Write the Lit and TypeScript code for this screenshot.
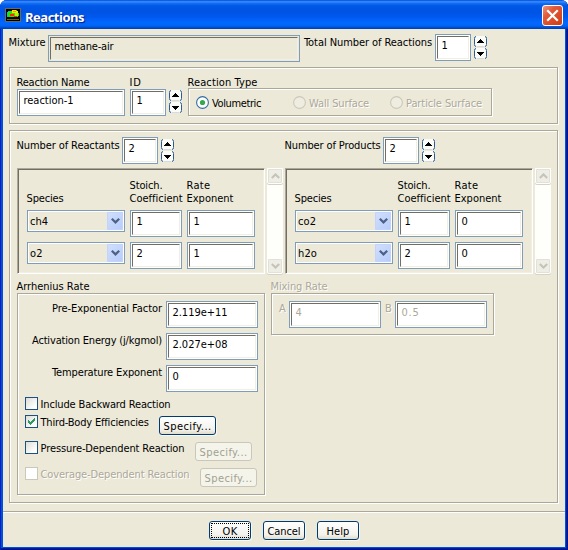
import { LitElement, html, css, svg, nothing } from "lit";
import { customElement, property } from "lit/decorators.js";
import { classMap } from "lit/directives/class-map.js";

// A single line of text whose tracking is adjusted to fill a given advance width.
@customElement("ui-label")
class UiLabel extends LitElement {
  @property() text = "";
  @property({ type: Number }) w = 0;

  static styles = css`
    :host { display: block; flex: none; white-space: pre; height: 13px; line-height: 13px; }
    .run { display: inline-block; }
  `;

  updated() {
    const run = this.renderRoot.querySelector(".run") as HTMLElement;
    run.style.letterSpacing = "0";
    if (!this.w) return;
    const natural = run.getBoundingClientRect().width;
    run.style.letterSpacing = `${(this.w - natural) / this.text.length}px`;
    this.style.width = `${this.w}px`;
  }

  render() {
    return html`<span class="run">${this.text}</span>`;
  }
}

@customElement("ui-field")
class UiField extends LitElement {
  @property() value = "";
  @property({ type: Number }) w = 0;
  @property({ type: Boolean }) readonly = false;
  @property({ type: Boolean }) disabled = false;

  static styles = css`
    :host { display: block; flex: none; height: 27px; }
    .outer { box-sizing: border-box; height: 27px; border: 1px solid #7f9db9; padding: 1px; background: #fff; }
    .inner {
      box-sizing: border-box; height: 23px; padding: 2px 0 0 3.5px;
      border: 1px solid; border-color: #716f64 #f1efe2 #f1efe2 #716f64;
    }
    .readonly { background: #ece9d8; }
    .disabled { color: #aca899; }
  `;

  render() {
    return html`<div class=${classMap({ outer: true, readonly: this.readonly, disabled: this.disabled })}>
      <div class="inner"><ui-label .text=${this.value} .w=${this.w}></ui-label></div>
    </div>`;
  }
}

@customElement("ui-spinner")
class UiSpinner extends LitElement {
  static styles = css`
    :host { display: flex; flex: none; flex-direction: column; gap: 1px; width: 13px; }
    svg { display: block; }
  `;

  render() {
    const button = (d: string) => html`<svg width="13" height="11" viewBox="0 0 13 11">
      <rect x="0" y="0" width="13" height="11" rx="2" fill="#fbfbf8"></rect>
      <path d="M2.5 10.5 H10.5" stroke="#d5dbe0"></path>
      <path d="M2 .5 Q.5 .5 .5 2.500 V8.500 Q.5 10.500 2 10.500 M11 .5 Q12.500 .5 12.500 2.500 V8.500 Q12.500 10.500 11 10.500" fill="none" stroke="#2d5c92"></path>
      <path d=${d} fill="#000" shape-rendering="crispEdges"></path>
    </svg>`;
    return html`${button("M6 3h1v1h1v1h1v1h1v1H3V6h1V5h1V4h1z")}${button("M3 4h7v1H9v1H8v1H7v1H6V7H5V6H4V5H3z")}`;
  }
}

@customElement("ui-select")
class UiSelect extends LitElement {
  @property() value = "";
  @property({ type: Number }) w = 0;

  static styles = css`
    :host {
      display: flex; box-sizing: border-box; height: 22px; border: 1px solid #7f9db9;
      padding: 1px; background: #fff; justify-content: space-between;
    }
    .value { flex: 1; background: #ece9d8; padding: 3px 0 0 1px; }
    .arrow {
      width: 16px; border-radius: 1px; display: grid; place-items: center;
      background: linear-gradient(135deg, #d3e0fe, #b5cbf9); box-shadow: inset 0 0 0 1px #c3d3fb;
    }
  `;

  render() {
    return html`<div class="value"><ui-label .text=${this.value} .w=${this.w}></ui-label></div>
      <div class="arrow"><svg width="9" height="6" viewBox="0 0 9 6">
        <path d="M.8 .8 L4.500 4.400 L8.200 .8" fill="none" stroke="#4d6185" stroke-width="2.200"></path>
      </svg></div>`;
  }
}

@customElement("ui-button")
class UiButton extends LitElement {
  @property() text = "";
  @property({ type: Number }) w = 0;
  @property({ type: Boolean }) disabled = false;
  @property({ type: Boolean }) focused = false;

  static styles = css`
    :host { display: block; flex: none; }
    .button {
      position: relative; box-sizing: border-box; height: 19px; border: 1px solid #003c74; border-radius: 3px;
      display: flex; justify-content: center; padding-top: 3px;
      background: linear-gradient(#fff, #f3f2ec 75%, #e0dccb);
      box-shadow: 1px 1px 0 #f8f7f0;
    }
    .disabled { border-color: #c9c7ba; background: #f5f4ea; color: #a1a192; box-shadow: none; }
    .focus { position: absolute; inset: 1px; border: 1px dotted #000; }
  `;

  render() {
    return html`<div class=${classMap({ button: true, disabled: this.disabled })}>
      ${this.focused ? html`<div class="focus"></div>` : nothing}
      <ui-label .text=${this.text} .w=${this.w}></ui-label>
    </div>`;
  }
}

@customElement("ui-checkbox")
class UiCheckbox extends LitElement {
  @property() text = "";
  @property({ type: Number }) w = 0;
  @property({ type: Boolean }) checked = false;
  @property({ type: Boolean }) disabled = false;

  static styles = css`
    :host { display: flex; flex: none; gap: 2.5px; }
    .box {
      box-sizing: border-box; width: 13px; height: 13px; border: 1px solid #1c5180;
      background: linear-gradient(135deg, #dcdcd7, #fff 80%);
    }
    .box.disabled { border-color: #cac8bb; background: #fff; }
    .caption { padding-top: 1px; }
    .caption.disabled { color: #aca899; text-shadow: 1px 1px 0 #fff; }
    svg { display: block; }
  `;

  render() {
    return html`<div class=${classMap({ box: true, disabled: this.disabled })}>
        ${this.checked
          ? html`<svg width="11" height="11" viewBox="0 0 11 11" shape-rendering="crispEdges">
              <path d="M2 4h1v1h1v1h1V5h1V4h1V3h1V2h1v3H8v1H7v1H6v1H5v1H4V8H3V7H2z" fill="#2f9a62"></path>
            </svg>`
          : nothing}
      </div>
      <div class=${classMap({ caption: true, disabled: this.disabled })}>
        <ui-label .text=${this.text} .w=${this.w}></ui-label>
      </div>`;
  }
}

@customElement("ui-radio")
class UiRadio extends LitElement {
  @property() text = "";
  @property({ type: Number }) w = 0;
  @property({ type: Boolean }) checked = false;
  @property({ type: Boolean }) disabled = false;

  static styles = css`
    :host { display: flex; flex: none; gap: 3px; }
    svg { display: block; }
    .caption { padding-top: 1px; }
    .caption.disabled { color: #aca899; text-shadow: 1px 1px 0 #fff; }
  `;

  render() {
    return html`<svg width="13" height="13" viewBox="0 0 13 13">
        <circle cx="6.500" cy="6.500" r="5.900" fill=${this.disabled ? "#efede0" : "#fff"}
          stroke=${this.disabled ? "#cac8bb" : "#336ba5"} stroke-width="1.100"></circle>
        ${this.checked ? svg`<circle cx="6.500" cy="6.500" r="2.600" fill="#35a94b"></circle>` : nothing}
      </svg>
      <div class=${classMap({ caption: true, disabled: this.disabled })}>
        <ui-label .text=${this.text} .w=${this.w}></ui-label>
      </div>`;
  }
}

@customElement("ui-scrollbar")
class UiScrollbar extends LitElement {
  static styles = css`
    :host {
      display: flex; flex: none; flex-direction: column; justify-content: space-between;
      width: 16px; height: 106px; background: #fefefb;
    }
    .arrow {
      box-sizing: border-box; width: 16px; height: 16px; display: grid; place-items: center;
      border: 1px solid #fff; border-radius: 2px; background: #efeee6; box-shadow: inset 0 0 0 1px #e3e1d5, 0 1px 0 #d6d3c4;
    }
  `;

  render() {
    const arrow = (d: string) => html`<div class="arrow"><svg width="9" height="6" viewBox="0 0 9 6">
      <path d=${d} fill="none" stroke="#c6c4b9" stroke-width="2.100"></path>
    </svg></div>`;
    return html`${arrow("M.8 5 L4.500 1.400 L8.200 5")}${arrow("M.8 1 L4.500 4.600 L8.200 1")}`;
  }
}

interface Species { name: string; w: number; coefficient: string; exponent: string; }

@customElement("app-root")
class AppRoot extends LitElement {
  static styles = css`
    :host {
      display: block; width: 568px; height: 550px; overflow: hidden; background: #fff; color: #000;
      font: 11px "DejaVu Sans Condensed", "DejaVu Sans", sans-serif; font-stretch: condensed;
    }
    .window {
      box-sizing: border-box; width: 568px; height: 550px; border-radius: 7px 7px 0 0; overflow: hidden;
      display: flex; flex-direction: column; background: #0050e0;
      box-shadow: inset 1px 0 0 #0020b8, inset -1px -1px 0 #00138c, inset -2px -2px 0 #001ea0;
    }
    .titlebar {
      box-sizing: border-box; height: 29px; flex: none; display: flex; padding: 5px 5px 0 5px;
      background: linear-gradient(#0048d8 0, #3a90ff 6%, #1470f5 11%, #0058e6 20%, #0054e3 40%, #0058ee 58%, #0268fe 78%, #0064f5 89%, #0048c8 96%, #003dac 100%);
    }
    .icon { display: block; margin-top: 3px; }
    .title {
      margin: 3px 0 0 4px; color: #fff; text-shadow: 1px 1px 1px #0a1883;
      font: bold 13px "Open Sans", "Noto Sans", sans-serif;
    }
    .close { margin-left: auto; display: block; }
    .body { margin: 0 3px; height: 518px; background: #ece9d8; display: flex; flex-direction: column; }
    .row { display: flex; align-items: flex-start; }
    .top { height: 38px; flex: none; padding-left: 5.5px; box-sizing: border-box; }
    .group {
      box-sizing: border-box; border: 1px solid #aca899; flex: none;
      box-shadow: 1px 1px 0 #fff, inset 1px 1px 0 #fff;
    }
    .mixture-label { margin: 7px 2.5px 0 0; }
    .mixture { width: 252px; margin-top: 6px; }
    .total-label { margin: 7px 3px 0 4px; }
    .count { width: 36px; }
    .top .count { margin-top: 5px; }
    .top ui-spinner { margin: 7px 0 0 3px; }

    .definition { width: 549px; height: 57px; margin-left: 6px; padding: 8px 0 0 7px; display: flex; gap: 5px; }
    .heading { margin-left: -.5px; }
    .name { width: 108px; }
    .id { width: 53px; }
    .id ui-spinner { margin: 1px 0 0 3px; }
    .types { width: 304px; height: 28px; margin-top: -1px; padding: 7px 0 0 7px; display: flex; }
    .wall { margin-left: 32px; }
    .particle { margin-left: 21px; }

    .details { width: 549px; height: 373px; margin: 6px 0 0 6px; padding: 6px 0 0 7px; }
    .halves { display: grid; grid-template-columns: 268px 268px; }
    .amount { height: 31px; }
    .amount ui-label { margin-top: 2px; }
    .reactants { margin-left: -.5px; width: 105.5px; }
    .products { margin-left: -.5px; width: 98.5px; }
    .amount ui-spinner { margin: 2px 0 0 3px; }
    .frames { display: flex; gap: 2px; }
    .frame {
      box-sizing: border-box; width: 248px; height: 106px; border: 1px solid;
      border-color: #aca899 #fff #fff #aca899;
      box-shadow: inset 1px 1px 0 #716f64, inset -1px -1px 0 #f1efe2;
      padding: 10px 0 0 9px;
      display: grid; grid-template-columns: 98px 52px 68px; grid-template-rows: 26px 27px 27px; gap: 5px;
    }
    .frame .heading { align-self: end; }

    .rates { margin-top: 6px; }
    .arrhenius { width: 248px; height: 202px; padding-top: 7px; }
    .parameter { display: flex; justify-content: flex-end; gap: 4px; margin: 0 6px 5px 0; }
    .parameter ui-label { margin-top: 1px; }
    .wide { width: 92px; }
    .option { display: flex; gap: 10.5px; height: 26px; padding-left: 7px; }
    .option.short { height: 18px; }
    .option ui-button { width: 57px; margin-top: 1px; }
    .dim { color: #aca899; text-shadow: 1px 1px 0 #fff; }
    .arr-col { width: 254px; }
    .split { display: flex; }
    .mixing { width: 223px; height: 42px; padding: 7px 0 0 7px; display: flex; }
    .mixing .dim { margin-top: 1px; width: 10px; }
    .mixing .b { margin-left: 4px; width: 10px; }

    .rule { height: 1px; flex: none; margin-top: 8px; background: #aca899; border-bottom: 1px solid #fff; }
    .actions { display: flex; gap: 12px; margin: 8px 0 0 206px; }
    .actions ui-button { width: 42px; }
  `;

  private species(rows: Species[]) {
    return html`<div class="frames">
      <div class="frame">
        <ui-label class="heading" text="Species" w="37"></ui-label>
        <div class="heading"><ui-label text="Stoich." w="33"></ui-label><ui-label text="Coefficient" w="53"></ui-label></div>
        <div class="heading"><ui-label text="Rate" w="24"></ui-label><ui-label text="Exponent" w="47"></ui-label></div>
        ${rows.map((r) => html`
          <ui-select .value=${r.name} .w=${r.w}></ui-select>
          <ui-field .value=${r.coefficient}></ui-field>
          <ui-field .value=${r.exponent}></ui-field>`)}
      </div>
      <ui-scrollbar></ui-scrollbar>
    </div>`;
  }

  private parameter(text: string, w: number, value: string, vw: number) {
    return html`<div class="parameter">
      <ui-label .text=${text} .w=${w}></ui-label>
      <ui-field class="wide" .value=${value} .w=${vw}></ui-field>
    </div>`;
  }

  render() {
    return html`<div class="window">
      <div class="titlebar">
        <svg class="icon" width="16" height="14" viewBox="0 0 16 14" shape-rendering="crispEdges">
          <path d="M0 0h16v14H0z" fill="#6c6a60"></path>
          <path d="M1 1h14v12H1z" fill="#000"></path>
          <path d="M3 3h2v1H3v4h2v1H2V4h1z" fill="#00c8b0"></path>
          <path d="M3 4h2V3h2V2h5v1h1v2h1v3h-1v1H4V8H3z" fill="#25e600"></path>
          <path d="M7 2h4v1h2v2H7z" fill="#ffe600"></path>
          <path d="M8 3h3v1H8z" fill="#ff8a00"></path>
          <path d="M5 6h4v2H5zM9 8h3v1H9z" fill="#ff2a00"></path>
          <path d="M10 5h3v3h-3z" fill="#b8f000"></path>
          <path d="M2 11h12v1H2z" fill="#706800"></path>
        </svg>
        <ui-label class="title" text="Reactions" w="59"></ui-label>
        <svg class="close" width="21" height="21" viewBox="0 0 21 21">
          <defs><linearGradient id="red" x1="0" y1="0" x2="1" y2="1">
            <stop offset="0" stop-color="#ee9a80"></stop><stop offset=".35" stop-color="#e2593a"></stop>
            <stop offset="1" stop-color="#cf3c10"></stop>
          </linearGradient></defs>
          <rect x=".5" y=".5" width="20" height="20" rx="2.500" fill="url(#red)" stroke="#fff"></rect>
          <path d="M6 6 L15 15 M15 6 L6 15" stroke="#fff" stroke-width="2.200" stroke-linecap="square"></path>
        </svg>
      </div>
      <div class="body">
        <div class="row top">
          <ui-label class="mixture-label" text="Mixture" w="37"></ui-label>
          <ui-field class="mixture" value="methane-air" w="59" readonly></ui-field>
          <ui-label class="total-label" text="Total Number of Reactions" w="128"></ui-label>
          <ui-field class="count" value="1"></ui-field>
          <ui-spinner></ui-spinner>
        </div>

        <div class="group definition">
          <div class="name">
            <ui-label class="heading" text="Reaction Name" w="73"></ui-label>
            <ui-field value="reaction-1" w="50"></ui-field>
          </div>
          <div class="id">
            <ui-label class="heading" text="ID" w="12"></ui-label>
            <div class="row"><ui-field class="count" value="1"></ui-field><ui-spinner></ui-spinner></div>
          </div>
          <div>
            <ui-label class="heading" text="Reaction Type" w="70"></ui-label>
            <div class="group types">
              <ui-radio text="Volumetric" w="49" checked></ui-radio>
              <ui-radio class="wall" text="Wall Surface" w="60" disabled></ui-radio>
              <ui-radio class="particle" text="Particle Surface" w="76" disabled></ui-radio>
            </div>
          </div>
        </div>

        <div class="group details">
          <div class="halves">
            <div>
              <div class="row amount">
                <div class="reactants"><ui-label text="Number of Reactants" w="103"></ui-label></div>
                <ui-field class="count" value="2"></ui-field><ui-spinner></ui-spinner>
              </div>
              ${this.species([
                { name: "ch4", w: 18, coefficient: "1", exponent: "1" },
                { name: "o2", w: 13, coefficient: "2", exponent: "1" },
              ])}
            </div>
            <div>
              <div class="row amount">
                <div class="products"><ui-label text="Number of Products" w="96"></ui-label></div>
                <ui-field class="count" value="2"></ui-field><ui-spinner></ui-spinner>
              </div>
              ${this.species([
                { name: "co2", w: 18, coefficient: "1", exponent: "0" },
                { name: "h2o", w: 19, coefficient: "2", exponent: "0" },
              ])}
            </div>
          </div>
          <div class="split rates">
            <div class="arr-col">
              <ui-label class="heading" text="Arrhenius Rate" w="73"></ui-label>
              <div class="group arrhenius">
                ${this.parameter("Pre-Exponential Factor", 110, "2.119e+11", 55)}
                ${this.parameter("Activation Energy (j/kgmol)", 130, "2.027e+08", 55)}
                ${this.parameter("Temperature Exponent", 110, "0", 0)}
                <div class="option short"><ui-checkbox text="Include Backward Reaction" w="130"></ui-checkbox></div>
                <div class="option">
                  <ui-checkbox text="Third-Body Efficiencies" w="108" checked></ui-checkbox>
                  <ui-button text="Specify..." w="48"></ui-button>
                </div>
                <div class="option">
                  <ui-checkbox text="Pressure-Dependent Reaction" w="144"></ui-checkbox>
                  <ui-button text="Specify..." w="48" disabled></ui-button>
                </div>
                <div class="option">
                  <ui-checkbox text="Coverage-Dependent Reaction" w="149" disabled></ui-checkbox>
                  <ui-button text="Specify..." w="48" disabled></ui-button>
                </div>
              </div>
            </div>
            <div>
              <ui-label class="heading dim" text="Mixing Rate" w="57"></ui-label>
              <div class="group mixing">
                <div class="dim"><ui-label text="A" w="7"></ui-label></div>
                <ui-field class="wide" value="4" disabled></ui-field>
                <div class="dim b"><ui-label text="B" w="7"></ui-label></div>
                <ui-field class="wide" value="0.5" w="18" disabled></ui-field>
              </div>
            </div>
          </div>
        </div>

        <div class="rule"></div>
        <div class="actions">
          <ui-button text="OK" w="15" focused></ui-button>
          <ui-button text="Cancel" w="33"></ui-button>
          <ui-button text="Help" w="23"></ui-button>
        </div>
      </div>
    </div>`;
  }
}
